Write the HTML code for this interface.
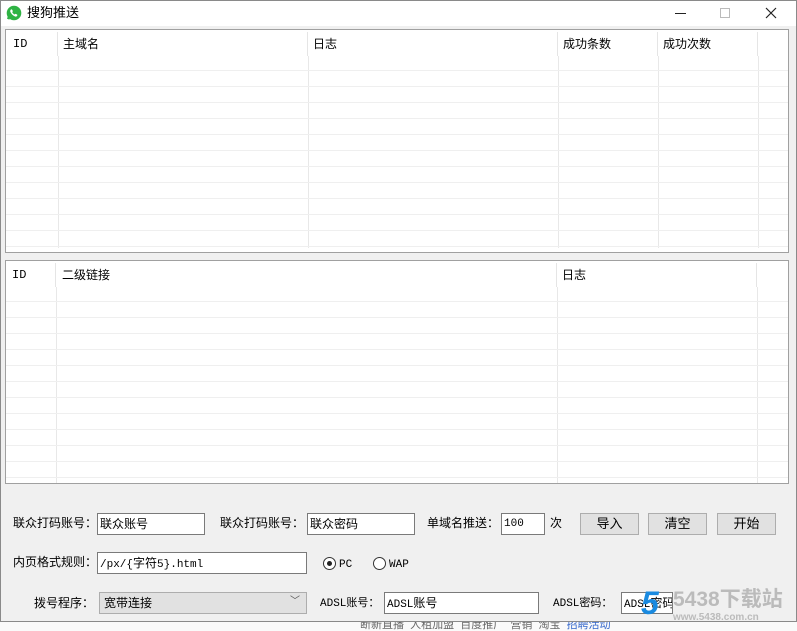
<!DOCTYPE html>
<html><head><meta charset="utf-8"><style>
*{box-sizing:border-box;margin:0;padding:0}
body{width:797px;height:631px;background:#fafafa;position:relative;overflow:hidden;font-family:"Liberation Sans","Noto Sans CJK SC",sans-serif;font-size:12px;color:#000;line-height:14px}
.a{position:absolute}
.win{left:0;top:0;width:797px;height:622px;background:#f0f0f0;border:1px solid #8a8a8a}
.title{left:1px;top:1px;width:795px;height:25px;background:#fff}
.grid{background:#fff;border:1px solid #a0a0a0;overflow:hidden}
.hl{position:absolute;left:0;right:0;height:1px;background:#efefef}
.vl{position:absolute;width:1px;background:#e8e8e8}
.hd{position:absolute;top:7px;font-size:12px}
.mono{font-family:"Liberation Mono","Noto Sans CJK SC",monospace;font-size:12px}
.lbl{font-size:12px}
.inp{background:#fff;border:1px solid #7a7a7a;height:22px;padding:3px 2px;font-size:12px;line-height:14px}
.btn{background:#e1e1e1;border:1px solid #adadad;height:22px;text-align:center;line-height:20px;font-size:13px}
</style></head><body>
<div class="a" style="left:360px;top:622px;width:260px;height:9px;color:#666;font-size:11px;overflow:hidden;line-height:6px">断新直播 &nbsp;人租加盟 &nbsp;百度推广 &nbsp;营销 &nbsp;淘宝 &nbsp;<span style="color:#36c">招聘活动</span></div>
<div class="a win"></div>
<div class="a title"></div>
<svg class="a" style="left:6px;top:5px" width="16" height="16" viewBox="0 0 16 16"><circle cx="8" cy="8" r="7.3" fill="#2fb344"/><path d="M2.2 14.2l1-3" stroke="#2fb344" stroke-width="2.5"/><path d="M5 4.5c.6-.4 1.2 0 1.4.6l.4 1c.1.4-.3.7-.6 1 .5 1 1.4 1.9 2.4 2.4.3-.3.6-.7 1-.6l1 .4c.6.2 1 .8.6 1.4-.6.9-1.6 1.1-2.6.6C6.8 10.4 5.2 8.8 4.4 7c-.4-1-.2-2 .6-2.5z" fill="#fff"/></svg>
<div class="a" style="left:27px;top:5px;font-size:13px;line-height:15px">搜狗推送</div>
<div class="a" style="left:675px;top:13px;width:11px;height:1px;background:#222"></div>
<div class="a" style="left:720px;top:8px;width:10px;height:10px;border:1px solid #bbb"></div>
<svg class="a" style="left:765px;top:7px" width="12" height="12"><path d="M1 1L11 11M11 1L1 11" stroke="#222" stroke-width="1.2"/></svg>

<div class="a grid" style="left:5px;top:29px;width:784px;height:224px">
<div class="vl" style="left:51px;top:2px;height:24px;background:#e5e5e5"></div>
<div class="vl" style="left:301px;top:2px;height:24px;background:#e5e5e5"></div>
<div class="vl" style="left:551px;top:2px;height:24px;background:#e5e5e5"></div>
<div class="vl" style="left:651px;top:2px;height:24px;background:#e5e5e5"></div>
<div class="vl" style="left:751px;top:2px;height:24px;background:#e5e5e5"></div>
<div class="vl" style="left:52px;top:26px;height:192px"></div>
<div class="vl" style="left:302px;top:26px;height:192px"></div>
<div class="vl" style="left:552px;top:26px;height:192px"></div>
<div class="vl" style="left:652px;top:26px;height:192px"></div>
<div class="vl" style="left:752px;top:26px;height:192px"></div>
<div class="hd mono" style="left:7px">ID</div>
<div class="hd" style="left:57px">主域名</div>
<div class="hd" style="left:307px">日志</div>
<div class="hd" style="left:557px">成功条数</div>
<div class="hd" style="left:657px">成功次数</div>
<div class="hl" style="top:40px"></div><div class="hl" style="top:56px"></div><div class="hl" style="top:72px"></div><div class="hl" style="top:88px"></div><div class="hl" style="top:104px"></div><div class="hl" style="top:120px"></div><div class="hl" style="top:136px"></div><div class="hl" style="top:152px"></div><div class="hl" style="top:168px"></div><div class="hl" style="top:184px"></div><div class="hl" style="top:200px"></div><div class="hl" style="top:216px"></div>
</div>

<div class="a grid" style="left:5px;top:260px;width:784px;height:224px">
<div class="vl" style="left:49px;top:2px;height:24px;background:#e5e5e5"></div>
<div class="vl" style="left:550px;top:2px;height:24px;background:#e5e5e5"></div>
<div class="vl" style="left:750px;top:2px;height:24px;background:#e5e5e5"></div>
<div class="vl" style="left:50px;top:26px;height:198px"></div>
<div class="vl" style="left:551px;top:26px;height:198px"></div>
<div class="vl" style="left:751px;top:26px;height:198px"></div>
<div class="hd mono" style="left:6px">ID</div>
<div class="hd" style="left:56px">二级链接</div>
<div class="hd" style="left:556px">日志</div>
<div class="hl" style="top:40px"></div><div class="hl" style="top:56px"></div><div class="hl" style="top:72px"></div><div class="hl" style="top:88px"></div><div class="hl" style="top:104px"></div><div class="hl" style="top:120px"></div><div class="hl" style="top:136px"></div><div class="hl" style="top:152px"></div><div class="hl" style="top:168px"></div><div class="hl" style="top:184px"></div><div class="hl" style="top:200px"></div><div class="hl" style="top:216px"></div>
</div>

<div class="a lbl" style="left:13px;top:516px">联众打码账号：</div>
<div class="a inp" style="left:97px;top:513px;width:108px">联众账号</div>
<div class="a lbl" style="left:220px;top:516px">联众打码账号：</div>
<div class="a inp" style="left:307px;top:513px;width:108px">联众密码</div>
<div class="a lbl" style="left:427px;top:516px">单域名推送：</div>
<div class="a inp mono" style="left:501px;top:513px;width:44px;font-size:11px">100</div>
<div class="a lbl" style="left:550px;top:516px">次</div>
<div class="a btn" style="left:580px;top:513px;width:59px">导入</div>
<div class="a btn" style="left:648px;top:513px;width:59px">清空</div>
<div class="a btn" style="left:717px;top:513px;width:59px">开始</div>

<div class="a lbl" style="left:13px;top:555px">内页格式规则：</div>
<div class="a inp" style="left:97px;top:552px;width:210px"><span class="mono" style="font-size:11px">/px/{</span>字符<span class="mono" style="font-size:11px">5}.html</span></div>
<div class="a" style="left:323px;top:557px;width:13px;height:13px;border:1px solid #333;border-radius:50%;background:#fff"></div>
<div class="a" style="left:327px;top:561px;width:5px;height:5px;border-radius:50%;background:#222"></div>
<div class="a mono" style="left:339px;top:558px;font-size:11px">PC</div>
<div class="a" style="left:373px;top:557px;width:13px;height:13px;border:1px solid #333;border-radius:50%;background:#fff"></div>
<div class="a mono" style="left:389px;top:558px;font-size:11px">WAP</div>

<div class="a lbl" style="left:34px;top:596px">拨号程序：</div>
<div class="a" style="left:99px;top:592px;width:208px;height:22px;background:#e1e1e1;border:1px solid #adadad;padding:3px 4px;font-size:12px">宽带连接<span style="position:absolute;right:6px;top:2px;font-size:10px;color:#555">﹀</span></div>
<div class="a" style="left:320px;top:596px;font-size:11px"><span class="mono" style="font-size:11px">ADSL</span>账号：</div>
<div class="a inp" style="left:384px;top:592px;width:155px"><span class="mono" style="font-size:11px">ADSL</span>账号</div>
<div class="a" style="left:553px;top:596px;font-size:11px"><span class="mono" style="font-size:11px">ADSL</span>密码：</div>
<div class="a inp" style="left:621px;top:592px;width:52px;overflow:hidden;white-space:nowrap"><span class="mono" style="font-size:11px">ADSL</span>密码</div>
<div class="a" style="left:641px;top:586px;font-size:32px;line-height:34px;font-weight:bold;color:#1a8ae0;font-style:italic">5</div>
<div class="a" style="left:673px;top:589px;font-size:21px;line-height:22px;font-weight:bold;color:#bbb">5438下载站</div>
<div class="a" style="left:673px;top:612px;font-size:10px;line-height:11px;font-weight:bold;color:#bbb">www.5438.com.cn</div>
</body></html>
